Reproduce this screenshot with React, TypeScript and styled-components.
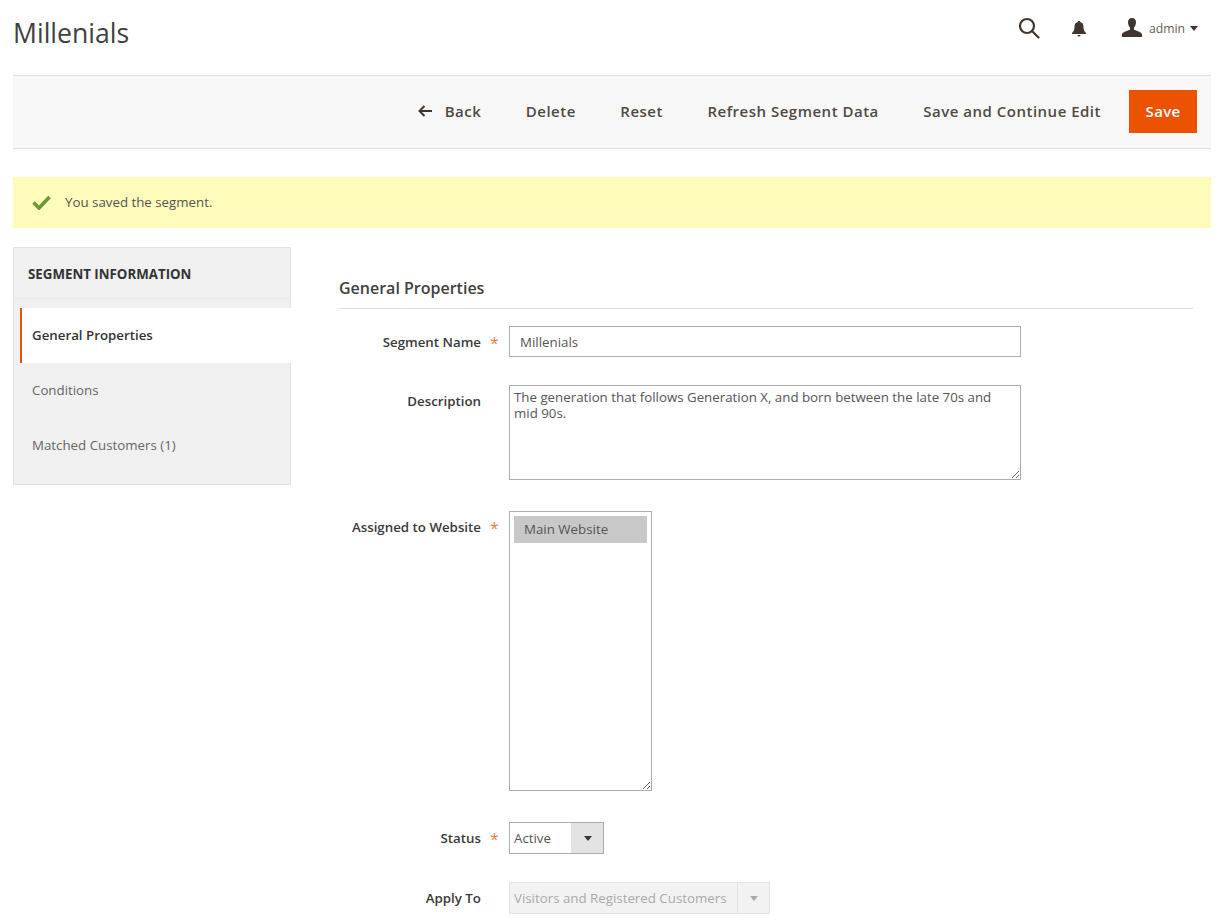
import styled, { createGlobalStyle } from "styled-components";

const GlobalStyle = createGlobalStyle`
  html, body {
    margin: 0;
    padding: 0;
    background: #fff;
  }
  body {
    font-family: "Open Sans", "Liberation Sans", sans-serif;
    font-size: 13.3px;
    color: #41362f;
    height: 921px;
    overflow: hidden;
  }
  * {
    box-sizing: border-box;
  }
`;

// page header
const Page = styled.div`
  padding: 0 13px;
`;

const TopBar = styled.header`
  display: flex;
  justify-content: space-between;
  height: 75px;
`;

const Title = styled.h1`
  margin: 14px 0 0;
  font-size: 26.6px;
  line-height: 38px;
  font-weight: 400;
  color: #41413f;
`;

const TopActions = styled.div`
  display: flex;
  align-items: center;
  height: 56px;
  padding-right: 13px;
`;

const SearchIcon = styled.svg`
  width: 22px;
  height: 22px;
  margin-right: 31px;
`;

const BellIcon = styled.svg`
  width: 16px;
  height: 18px;
  margin: 2px 35px 0 0;
`;

const UserIcon = styled.svg`
  width: 20px;
  height: 19px;
  margin: -2px 7px 0 0;
`;

const UserName = styled.span`
  font-size: 12.2px;
  color: #676056;
  margin-right: 5px;
`;

const SmallCaret = styled.span`
  width: 0;
  height: 0;
  border-left: 4px solid transparent;
  border-right: 4px solid transparent;
  border-top: 5px solid #41362f;
`;

// action toolbar
const Toolbar = styled.div`
  display: flex;
  align-items: center;
  justify-content: flex-end;
  height: 74px;
  padding: 0 14px 2px 0;
  background: #f8f8f8;
  border-top: 1px solid #e3e3e3;
  border-bottom: 1px solid #e3e3e3;
`;

const ToolButton = styled.button`
  display: flex;
  align-items: center;
  height: 44px;
  margin-right: 44.5px;
  padding: 0;
  border: 0;
  background: none;
  font-family: inherit;
  font-size: 15px;
  font-weight: 600;
  letter-spacing: 0.5px;
  color: #514943;

  &:nth-last-child(2) {
    margin-right: 28px;
  }
`;

const BackIcon = styled.svg`
  width: 15px;
  height: 12px;
  margin-right: 12px;
`;

const SaveButton = styled.button`
  width: 68px;
  height: 43px;
  border: 0;
  background: #eb5202;
  color: #fff;
  font-family: inherit;
  font-size: 15px;
  font-weight: 600;
  letter-spacing: 0.3px;
`;

// message
const Message = styled.div`
  display: flex;
  align-items: center;
  height: 51px;
  margin-top: 28px;
  padding: 0 0 1px 19px;
  background: #fffbbb;
  font-size: 13.3px;
  color: #555;
`;

const CheckIcon = styled.svg`
  width: 19px;
  height: 15px;
  margin-right: 14px;
`;

// main
const Main = styled.div`
  display: flex;
  margin-top: 19px;
`;

const Sidebar = styled.aside`
  width: 278px;
  height: 238px;
  flex-shrink: 0;
  background: #f0f0f0;
  border: 1px solid #e3e3e3;
`;

const SidebarHead = styled.div`
  display: flex;
  align-items: center;
  height: 51px;
  padding: 1px 0 0 14px;
  margin-bottom: 9px;
  border-bottom: 1px solid #e8e8e8;
  font-size: 13.3px;
  font-weight: 700;
  color: #333;
`;

const SideItem = styled.div<{ $active?: boolean }>`
  display: flex;
  align-items: center;
  height: 55px;
  margin-left: 6px;
  margin-right: -1px;
  padding-left: ${(props) => (props.$active ? "10px" : "12px")};
  padding-bottom: 1px;
  font-size: 13.3px;
  font-weight: ${(props) => (props.$active ? 600 : 400)};
  color: ${(props) => (props.$active ? "#333" : "#666")};
  background: ${(props) => (props.$active ? "#fff" : "transparent")};
  border-left: ${(props) => (props.$active ? "2px solid #eb5202" : "0")};
`;

const Content = styled.main`
  width: 854px;
  margin-left: 48px;
`;

const SectionTitle = styled.h2`
  height: 43px;
  margin: 19px 0 17px;
  padding-top: 11px;
  border-bottom: 1px solid #dcdcdc;
  font-size: 16px;
  line-height: 22px;
  font-weight: 600;
  color: #41413f;
`;

const Field = styled.div<{ $gap: number }>`
  display: flex;
  align-items: flex-start;
  margin-bottom: ${(props) => props.$gap}px;
`;

const Label = styled.label`
  width: 142px;
  flex-shrink: 0;
  padding-top: 6px;
  text-align: right;
  font-size: 13.3px;
  line-height: 20px;
  font-weight: 600;
  color: #3a3a3a;
`;

const Star = styled.span<{ $hidden?: boolean }>`
  width: 28px;
  flex-shrink: 0;
  padding: 7px 0 0 9px;
  font-size: 16px;
  line-height: 20px;
  color: #eb5202;
  opacity: 0.75;
  visibility: ${(props) => (props.$hidden ? "hidden" : "visible")};
`;

const TextInput = styled.input`
  display: block;
  width: 512px;
  height: 31px;
  padding: 0 10px;
  border: 1px solid #adadad;
  outline: 0;
  font-family: inherit;
  font-size: 13.3px;
  color: #555;
`;

const TextArea = styled.textarea`
  display: block;
  width: 512px;
  height: 95px;
  padding: 4px;
  border: 1px solid #adadad;
  border-radius: 0;
  outline: 0;
  font-family: inherit;
  font-size: 13.3px;
  line-height: 15.5px;
  color: #555;
`;

const ListBox = styled.div`
  width: 143px;
  height: 280px;
  padding: 4px;
  border: 1px solid #adadad;
  overflow: hidden;
  resize: both;
`;

const ListOption = styled.div`
  height: 27px;
  padding-left: 10px;
  background: #c8c8c8;
  font-size: 13.3px;
  line-height: 26px;
  color: #555;
`;

const SelectBox = styled.div<{ $disabled?: boolean; $width: number }>`
  display: flex;
  width: ${(props) => props.$width}px;
  height: 32px;
  border: 1px solid ${(props) => (props.$disabled ? "#e3e3e3" : "#adadad")};
  background: ${(props) => (props.$disabled ? "#f2f2f2" : "#fff")};
`;

const SelectValue = styled.span<{ $disabled?: boolean }>`
  flex: 1;
  padding-left: 4px;
  font-size: 13.3px;
  line-height: 30px;
  white-space: nowrap;
  color: ${(props) => (props.$disabled ? "#a9a9a9" : "#555")};
`;

const SelectArrow = styled.span<{ $disabled?: boolean }>`
  display: flex;
  align-items: center;
  justify-content: center;
  width: 32px;
  background: ${(props) => (props.$disabled ? "#f2f2f2" : "#e3e3e3")};
  border-left: 1px solid #e3e3e3;

  &::after {
    content: "";
    border-left: 4px solid transparent;
    border-right: 4px solid transparent;
    border-top: 5px solid ${(props) => (props.$disabled ? "#a9a9a9" : "#41362f")};
  }
`;

export default function App() {
  return (
    <Page>
      <GlobalStyle />
      <TopBar>
        <Title>Millenials</Title>
        <TopActions>
          <SearchIcon viewBox="0 0 22 22" fill="none" stroke="#41362f" strokeWidth="2.2">
            <circle cx="9" cy="9" r="7" />
            <path d="M14 14l6.500 6.500" strokeLinecap="round" />
          </SearchIcon>
          <BellIcon viewBox="0 0 16 18" fill="#41362f">
            <path d="M8 1c.8 0 1.200.5 1.300 1.100C11.600 2.800 12.500 4.500 12.500 7c0 3 .8 4.500 2.500 6v1H1v-1c1.700-1.500 2.500-3 2.500-6 0-2.500.9-4.200 3.200-4.900C6.800 1.500 7.200 1 8 1z" />
            <path d="M6.500 15h3a1.500 1.500 0 0 1-3 0z" />
          </BellIcon>
          <UserIcon viewBox="0 0 20 19" fill="#41362f">
            <path d="M10 0c2.600 0 4 1.800 4 4.300 0 2.200-.9 4.300-2 5.400v1.800c1 1 7 2.200 8 4.500V19H0v-3c1-2.300 7-3.500 8-4.500V9.700C6.900 8.600 6 6.500 6 4.300 6 1.800 7.400 0 10 0z" />
          </UserIcon>
          <UserName>admin</UserName>
          <SmallCaret />
        </TopActions>
      </TopBar>

      <Toolbar>
        <ToolButton>
          <BackIcon viewBox="0 0 15 12" fill="none" stroke="#41362f" strokeWidth="2">
            <path d="M14 6H2M6.500 1L1.500 6l5 5" />
          </BackIcon>
          Back
        </ToolButton>
        <ToolButton>Delete</ToolButton>
        <ToolButton>Reset</ToolButton>
        <ToolButton>Refresh Segment Data</ToolButton>
        <ToolButton>Save and Continue Edit</ToolButton>
        <SaveButton>Save</SaveButton>
      </Toolbar>

      <Message>
        <CheckIcon viewBox="0 0 19 15" fill="none" stroke="#6a9a35" strokeWidth="3.600">
          <path d="M1.500 7.500L7 13 17.500 2" />
        </CheckIcon>
        You saved the segment.
      </Message>

      <Main>
        <Sidebar>
          <SidebarHead>SEGMENT INFORMATION</SidebarHead>
          <SideItem $active>General Properties</SideItem>
          <SideItem>Conditions</SideItem>
          <SideItem>Matched Customers (1)</SideItem>
        </Sidebar>

        <Content>
          <SectionTitle>General Properties</SectionTitle>

          <Field $gap={28}>
            <Label>Segment Name</Label>
            <Star>*</Star>
            <TextInput defaultValue="Millenials" />
          </Field>

          <Field $gap={31}>
            <Label>Description</Label>
            <Star $hidden>*</Star>
            <TextArea defaultValue="The generation that follows Generation X, and born between the late 70s and mid 90s." />
          </Field>

          <Field $gap={31}>
            <Label>Assigned to Website</Label>
            <Star>*</Star>
            <ListBox>
              <ListOption>Main Website</ListOption>
            </ListBox>
          </Field>

          <Field $gap={28}>
            <Label>Status</Label>
            <Star>*</Star>
            <SelectBox $width={95}>
              <SelectValue>Active</SelectValue>
              <SelectArrow />
            </SelectBox>
          </Field>

          <Field $gap={0}>
            <Label>Apply To</Label>
            <Star $hidden>*</Star>
            <SelectBox $disabled $width={261}>
              <SelectValue $disabled>Visitors and Registered Customers</SelectValue>
              <SelectArrow $disabled />
            </SelectBox>
          </Field>
        </Content>
      </Main>
    </Page>
  );
}
